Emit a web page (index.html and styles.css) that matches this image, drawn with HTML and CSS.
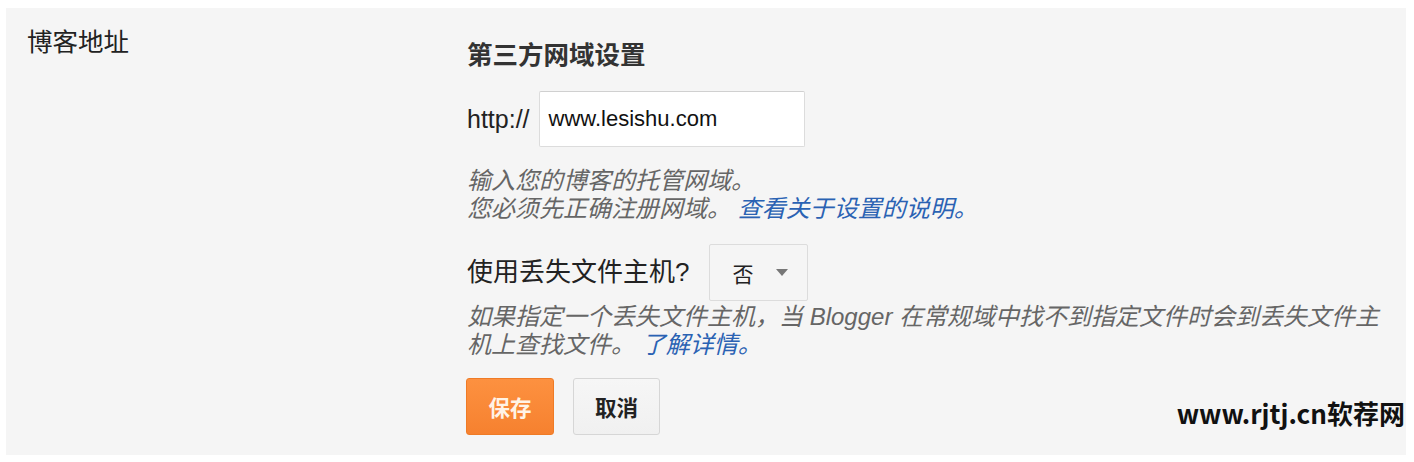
FILE: index.html
```html
<!DOCTYPE html>
<html lang="zh-CN">
<head>
<meta charset="utf-8">
<title>博客地址</title>
<link rel="stylesheet" href="styles.css">
</head>
<body>
<div class="page">
  <section class="panel">
    <div class="label">博客地址</div>
    <div class="content">
      <h2 class="title">第三方网域设置</h2>
      <div class="url-row">
        <span class="prefix">http://</span>
        <div class="input">www.lesishu.com</div>
      </div>
      <p class="help help-domain">输入您的博客的托管网域。<br>您必须先正确注册网域。 <a class="link" href="#">查看关于设置的说明。</a></p>
      <div class="missing-row">
        <span class="question">使用丢失文件主机?</span>
        <div class="select"><span class="select-value">否</span><span class="caret"></span></div>
      </div>
      <p class="help help-missing">如果指定一个丢失文件主机，当 Blogger 在常规域中找不到指定文件时会到丢失文件主<br>机上查找文件。 <a class="link" href="#">了解详情。</a></p>
      <div class="actions">
        <button class="btn btn-save" type="button">保存</button>
        <button class="btn btn-cancel" type="button">取消</button>
      </div>
    </div>
  </section>
  <div class="watermark">www.rjtj.cn软荐网</div>
</div>
</body>
</html>
```

FILE: styles.css
```css
* { box-sizing: border-box; }

html, body {
  margin: 0;
  padding: 0;
  background: #ffffff;
}

body {
  font-family: "Liberation Sans", "Noto Sans CJK SC", sans-serif;
  color: #222;
  width: 1414px;
  height: 462px;
  overflow: hidden;
}

.page {
  position: relative;
  width: 1414px;
  height: 462px;
  padding: 8px 8px 7px 6px;
}

.panel {
  display: flex;
  height: 447px;
  background: #f5f5f5;
  padding: 0 0 0 21px;
}

.label {
  width: 440px;
  flex: none;
  font-size: 25.5px;
  line-height: 30px;
  padding-top: 19px;
  color: #222;
}

.content {
  width: 940px;
  padding-top: 32px;
}

.title {
  margin: 0;
  font-size: 25.5px;
  line-height: 30px;
  font-weight: bold;
  color: #333;
}

.url-row {
  display: flex;
  align-items: center;
  gap: 9px;
  margin-top: 21px;
}

.prefix {
  font-size: 25px;
  color: #222;
}

.input {
  width: 266px;
  height: 56px;
  background: #fff;
  border: 1px solid #dcdcdc;
  border-top-color: #d0d0d0;
  border-radius: 2px;
  padding: 0 9px;
  display: flex;
  align-items: center;
  font-size: 22px;
  color: #111;
}

.help {
  margin: 0;
  font-size: 24px;
  line-height: 28px;
  font-style: italic;
  color: #666;
}

.help-domain { margin-top: 20px; }

.link {
  color: #2a62b3;
  text-decoration: none;
}

.missing-row {
  display: flex;
  align-items: center;
  gap: 20px;
  margin-top: 21px;
}

.question {
  font-size: 26px;
  color: #222;
  padding-bottom: 6px;
}

.select {
  width: 99px;
  height: 57px;
  border: 1px solid #dcdcdc;
  border-radius: 2px;
  background: #f5f5f5;
  display: flex;
  align-items: center;
  padding-left: 22px;
  gap: 23px;
}

.select-value {
  font-size: 21px;
  color: #222;
}

.caret {
  width: 0;
  height: 0;
  border-left: 6px solid transparent;
  border-right: 6px solid transparent;
  border-top: 7px solid #777;
}

.help-missing { margin-top: 2px; }

.actions {
  display: flex;
  gap: 19px;
  margin-top: 19px;
  margin-left: -1px;
}

.btn {
  width: 88px;
  height: 57px;
  border-radius: 3px;
  font-family: "Liberation Sans", "Noto Sans CJK SC", sans-serif;
  font-size: 21.5px;
  font-weight: bold;
  cursor: pointer;
  padding: 0;
}

.btn-save {
  background: linear-gradient(#fd9140, #f6812f);
  border: 1px solid #ef7b26;
  color: #fff3e6;
}

.btn-cancel {
  width: 87px;
  background: linear-gradient(#f6f6f6, #f0f0f0);
  border: 1px solid #d6d6d6;
  color: #222;
}

.watermark {
  position: absolute;
  right: 9px;
  top: 397px;
  font-family: "Noto Sans CJK SC", sans-serif;
  font-weight: bold;
  font-size: 26px;
  line-height: 32px;
  color: #111;
}
```
